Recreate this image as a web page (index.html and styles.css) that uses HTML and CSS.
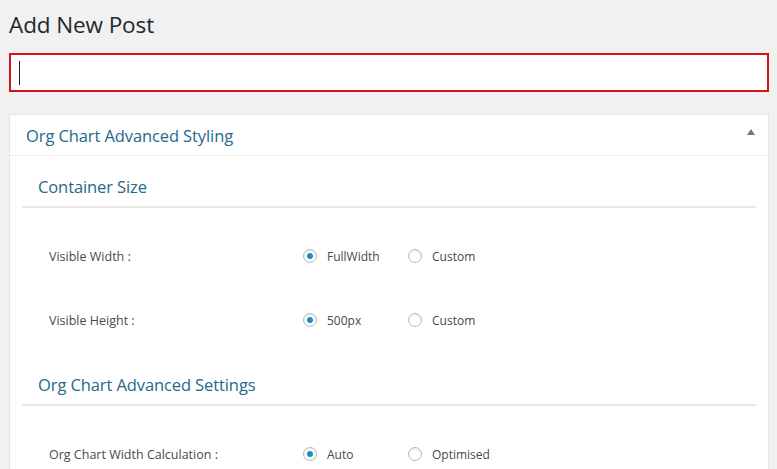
FILE: index.html
```html
<!DOCTYPE html>
<html>
<head>
<meta charset="utf-8">
<link rel="stylesheet" href="styles.css">
</head>
<body>
<div class="wrap">
  <h1 class="page-title">Add New Post</h1>
  <div class="title-input"><span class="caret"></span></div>
  <div class="panel">
    <div class="panel-head">
      <span class="panel-title">Org Chart Advanced Styling</span>
      <span class="toggle"></span>
    </div>
    <div class="panel-body">
      <h2 class="section-title">Container Size</h2>
      <div class="row">
        <span class="label">Visible Width :</span>
        <span class="opts">
          <span class="opt"><span class="radio checked"></span>FullWidth</span>
          <span class="opt"><span class="radio"></span>Custom</span>
        </span>
      </div>
      <div class="row">
        <span class="label">Visible Height :</span>
        <span class="opts">
          <span class="opt"><span class="radio checked"></span>500px</span>
          <span class="opt"><span class="radio"></span>Custom</span>
        </span>
      </div>
      <h2 class="section-title">Org Chart Advanced Settings</h2>
      <div class="row">
        <span class="label">Org Chart Width Calculation :</span>
        <span class="opts">
          <span class="opt"><span class="radio checked"></span>Auto</span>
          <span class="opt"><span class="radio"></span>Optimised</span>
        </span>
      </div>
    </div>
  </div>
</div>
</body>
</html>
```

FILE: styles.css
```css
html, body {
  margin: 0;
  padding: 0;
  background: #f1f1f1;
  font-family: "Open Sans", "Noto Sans", sans-serif;
  overflow: hidden;
}
.wrap {
  padding: 0 8px 0 9px;
}
.page-title {
  margin: 0;
  padding-top: 10px;
  font-size: 22.5px;
  line-height: 30px;
  font-weight: 400;
  color: #23282d;
  letter-spacing: -0.1px;
}
.title-input {
  margin-top: 13px;
  height: 35px;
  background: #fff;
  border: 2px solid #d3141b;
  display: flex;
  align-items: center;
  padding-left: 8px;
}
.caret {
  width: 1px;
  height: 24px;
  background: #222;
}
.panel {
  margin-top: 22px;
  background: #fff;
  border: 1px solid #e5e5e5;
  height: 400px;
}
.panel-head {
  height: 40px;
  border-bottom: 1px solid #eee;
  display: flex;
  align-items: center;
  justify-content: space-between;
  padding: 0 13px 0 16px;
}
.panel-title {
  font-size: 16.5px;
  color: #23698a;
  letter-spacing: -0.1px;
}
.toggle {
  width: 0;
  height: 0;
  border-left: 4px solid transparent;
  border-right: 4px solid transparent;
  border-bottom: 6px solid #72777c;
  margin-top: -6px;
}
.panel-body {
  padding: 0 12px;
}
.section-title {
  margin: 0;
  font-size: 16.5px;
  font-weight: 400;
  color: #23698a;
  padding: 19px 0 0 16px;
  height: 31px;
  border-bottom: 2px solid #e8e8e8;
  line-height: 24px;
  letter-spacing: -0.1px;
}
.section-title + .row {
  margin-top: 34px;
}
.row {
  display: grid;
  grid-template-columns: 254px 1fr;
  align-items: center;
  height: 28px;
  padding-left: 27px;
  font-size: 12.5px;
  color: #4a4a4a;
}
.row + .row {
  margin-top: 36px;
}
.row + .section-title {
  margin-top: 20px;
}
.opts {
  display: flex;
  align-items: center;
  font-size: 12px;
}
.opt {
  display: flex;
  align-items: center;
  width: 105px;
}
.radio {
  width: 14px;
  height: 14px;
  border: 1px solid #b4b9be;
  border-radius: 50%;
  box-sizing: border-box;
  margin-right: 10px;
  box-shadow: inset 0 1px 2px rgba(0,0,0,0.1);
  display: flex;
  align-items: center;
  justify-content: center;
}
.radio.checked::before {
  content: "";
  width: 6px;
  height: 6px;
  border-radius: 50%;
  background: #1e8cbe;
}
```
